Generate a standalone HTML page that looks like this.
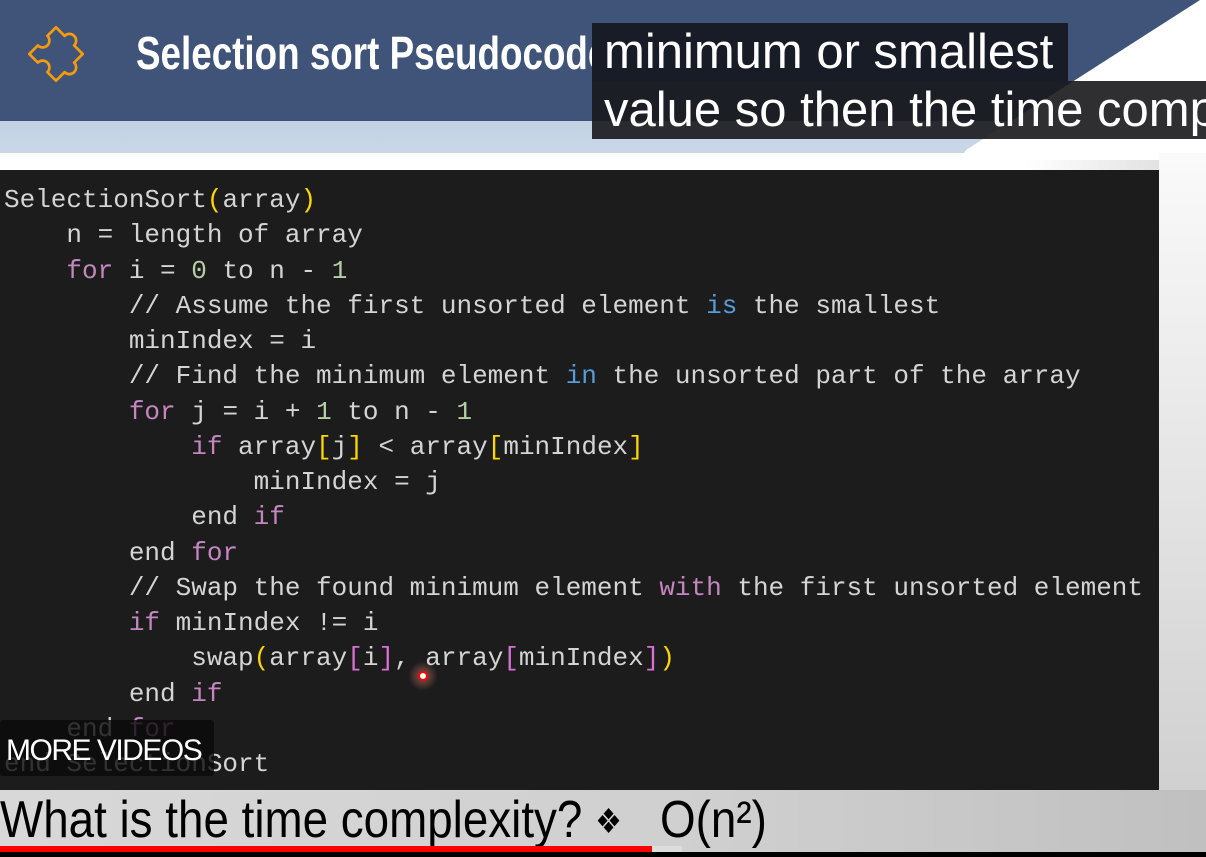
<!DOCTYPE html>
<html><head><meta charset="utf-8"><style>
body{margin:0;width:1206px;height:857px;overflow:hidden;background:linear-gradient(90deg,#fff 0,#fff 85%,#d8d8d8 100%);position:relative;font-family:"Liberation Sans",sans-serif}
.hdr{position:absolute;left:0;top:0;width:1206px;height:121px;background:#3f5478}
.band{position:absolute;left:0;top:121px;width:1206px;height:32px;background:linear-gradient(180deg,#c3d2e5,#c9d7e8)}
.slash{position:absolute;left:960px;top:0;width:300px;height:160px;background:#fff;clip-path:polygon(240px 0,300px 0,300px 160px,0 160px,6px 150px)}
.title{position:absolute;left:136px;top:27px;color:#fff;font-weight:bold;font-size:46px;line-height:52px;transform:scaleX(0.8);transform-origin:left;white-space:nowrap}
.cap{position:absolute;color:#fff;font-size:49px;white-space:nowrap;line-height:58px;padding:0 12px;overflow:hidden;box-sizing:border-box}
.code{position:absolute;left:0;top:170px;width:1159px;height:620px;background:#1c1c1c}
pre{position:absolute;left:4px;top:183px;margin:0;font-family:"Liberation Mono",monospace;font-size:26px;line-height:35.25px;color:#d4d4d4}
.k{color:#c586c0}.n{color:#b5cea8}.y{color:#ffd700}.b{color:#569cd6}.p{color:#da70d6}
.right{position:absolute;left:1159px;top:153px;width:47px;height:640px;background:linear-gradient(180deg,#fafafa,#d0d0d0)}
.bottom{position:absolute;left:0;top:790px;width:1206px;height:62px;background:linear-gradient(90deg,#d8d8d8,#cfcfcf 60%,#c0c0c0)}
.q{position:absolute;left:0;top:790px;font-size:52px;line-height:60px;color:#000;white-space:nowrap;transform:scaleX(0.88);transform-origin:left}
.more{position:absolute;left:0;top:720px;width:214px;height:56px;background:rgba(10,10,10,0.8);border-radius:3px;color:#fff;font-size:30px;line-height:62px;padding-left:6px;box-sizing:border-box;letter-spacing:-1.5px}
</style></head><body>
<div class="hdr"></div><div class="band"></div><div class="slash"></div>
<svg style="position:absolute;left:24px;top:22px" width="64" height="64" viewBox="-32 -32 64 64"><g transform="rotate(45) scale(1.35)"><path d="M-14 -14 H-5 A5 5 0 1 1 5 -14 H14 V-5 A5 5 0 1 1 14 5 V14 H5 A5 5 0 1 0 -5 14 H-14 V5 A5 5 0 1 0 -14 -5 Z" fill="none" stroke="#f59b0c" stroke-width="2" stroke-linejoin="round"/></g></svg>
<div class="title">Selection sort Pseudocode</div>
<div class="cap" style="left:592px;top:23px;background:#181c26;width:476px">minimum or smallest</div>
<div class="cap" style="left:592px;top:81px;background:rgba(24,24,28,0.9);width:620px">value so then the time comp</div>
<div class="code"></div>
<div class="right"></div>
<pre>SelectionSort<span class="y">(</span>array<span class="y">)</span>
    n = length of array
    <span class="k">for</span> i = <span class="n">0</span> to n - <span class="n">1</span>
        // Assume the first unsorted element <span class="b">is</span> the smallest
        minIndex = i
        // Find the minimum element <span class="b">in</span> the unsorted part of the array
        <span class="k">for</span> j = i + <span class="n">1</span> to n - <span class="n">1</span>
            <span class="k">if</span> array<span class="y">[</span>j<span class="y">]</span> &lt; array<span class="y">[</span>minIndex<span class="y">]</span>
                minIndex = j
            end <span class="k">if</span>
        end <span class="k">for</span>
        // Swap the found minimum element <span class="k">with</span> the first unsorted element
        <span class="k">if</span> minIndex != i
            swap<span class="y">(</span>array<span class="p">[</span>i<span class="p">]</span>, array<span class="p">[</span>minIndex<span class="p">]</span><span class="y">)</span>
        end <span class="k">if</span>
    end <span class="k">for</span>
end SelectionSort</pre>
<div style="position:absolute;left:408px;top:661px;width:30px;height:30px;border-radius:50%;background:radial-gradient(circle,rgba(255,140,120,0.5),rgba(255,140,120,0) 70%)"></div>
<div style="position:absolute;left:418px;top:671px;width:6px;height:6px;border-radius:50%;border:2px solid #f00;background:#fff"></div>
<div class="more">MORE VIDEOS</div>
<div class="bottom"></div>
<div class="q">What is the time complexity? <span style="font-size:34px;vertical-align:4px">❖</span>&nbsp;&nbsp; O(n²)</div>
<div style="position:absolute;left:0;top:846px;width:652px;height:6px;background:#f00"></div>
<div style="position:absolute;left:652px;top:846px;width:30px;height:6px;background:#ddd"></div>
<div style="position:absolute;left:0;top:852px;width:1206px;height:5px;background:#000"></div>
</body></html>
